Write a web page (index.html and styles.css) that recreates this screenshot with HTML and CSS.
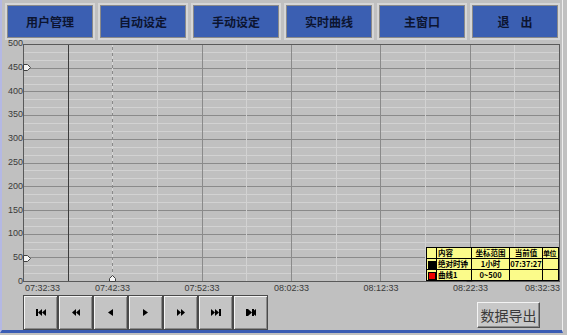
FILE: index.html
```html
<!DOCTYPE html>
<html lang="zh-CN">
<head>
<meta charset="UTF-8">
<meta name="viewport" content="width=device-width, initial-scale=1.0">
<title>实时曲线</title>
<link rel="stylesheet" href="styles.css">
</head>
<body>
<div class="screen">
    <div class="nav">
        <button class="nav-btn">用户管理</button>
        <button class="nav-btn">自动设定</button>
        <button class="nav-btn">手动设定</button>
        <button class="nav-btn">实时曲线</button>
        <button class="nav-btn">主窗口</button>
        <button class="nav-btn">退&nbsp;&nbsp;&nbsp;&nbsp;出</button>
    </div>

    <div class="chart">
        <div class="y-axis">
            <span>500</span><span>450</span><span>400</span><span>350</span><span>300</span><span>250</span>
            <span>200</span><span>150</span><span>100</span><span>50</span><span>0</span>
        </div>
        <div class="plot">
            <svg id="grid" class="grid" width="537" height="238" viewBox="0 0 537 238"></svg>
            <table class="legend">
                <colgroup>
                    <col style="width: 10px">
                    <col style="width: 35px">
                    <col style="width: 38px">
                    <col style="width: 33px">
                    <col style="width: 16px">
                </colgroup>
                <tr><td class="sw"></td><td>内容</td><td class="c">坐标范围</td><td class="c">当前值</td><td class="unit">单位</td></tr>
                <tr><td class="sw"><i class="box black"></i></td><td>绝对时钟</td><td class="c">1小时</td><td class="c">07:37:27</td><td></td></tr>
                <tr><td class="sw"><i class="box red"></i></td><td>曲线1</td><td class="c">0~500</td><td></td><td></td></tr>
            </table>
        </div>
    </div>

    <div class="x-axis">
        <span class="first">07:32:33</span>
        <span>07:42:33</span>
        <span>07:52:33</span>
        <span>08:02:33</span>
        <span>08:12:33</span>
        <span>08:22:33</span>
        <span class="last">08:32:33</span>
    </div>

    <div class="footer">
        <div class="player">
            <button class="play-btn" title="first">
                <svg width="10" height="7" viewBox="0 0 10 7"><rect x="0" y="0" width="2" height="7"/><polygon points="2,3.5 6,0 6,7"/><polygon points="6,3.5 10,0 10,7"/></svg>
            </button>
            <button class="play-btn" title="fast back">
                <svg width="8" height="7" viewBox="0 0 8 7"><polygon points="0,3.5 4,0 4,7"/><polygon points="4,3.5 8,0 8,7"/></svg>
            </button>
            <button class="play-btn" title="back">
                <svg width="5" height="7" viewBox="0 0 5 7"><polygon points="0,3.5 5,0 5,7"/></svg>
            </button>
            <button class="play-btn" title="forward">
                <svg width="5" height="7" viewBox="0 0 5 7"><polygon points="0,0 5,3.5 0,7"/></svg>
            </button>
            <button class="play-btn" title="fast forward">
                <svg width="8" height="7" viewBox="0 0 8 7"><polygon points="0,0 4,3.5 0,7"/><polygon points="4,0 8,3.5 4,7"/></svg>
            </button>
            <button class="play-btn" title="last">
                <svg width="10" height="7" viewBox="0 0 10 7"><polygon points="0,0 4,3.5 0,7"/><polygon points="4,0 8,3.5 4,7"/><rect x="8" y="0" width="2" height="7"/></svg>
            </button>
            <button class="play-btn" title="now">
                <svg width="10" height="7" viewBox="0 0 10 7"><rect x="0" y="0" width="2" height="7"/><polygon points="2,0 6,3.5 2,7"/><rect x="6" y="0" width="2" height="7"/><polygon points="8,1.5 10,0 10,7 8,5.5"/></svg>
            </button>
        </div>
        <button class="export">数据导出</button>
    </div>
</div>

<script>
    // build the chart grid
    const svg = document.getElementById('grid');
    const NS = 'http://www.w3.org/2000/svg';
    const W = 536, H = 237;

    function line(x1, y1, x2, y2, cls) {
        let l = document.createElementNS(NS, 'line');
        l.setAttribute('x1', x1);
        l.setAttribute('y1', y1);
        l.setAttribute('x2', x2);
        l.setAttribute('y2', y2);
        l.setAttribute('class', cls);
        svg.appendChild(l);
    }

    // horizontal lines, 10 divisions with 2 minor lines each
    for (let i = 1; i < 30; i++) {
        let y = Math.round(i * H / 30) + 0.5;
        line(0, y, W, y, i % 3 ? 'minor' : 'major');
    }
    // vertical lines, every 5 minutes
    for (let j = 1; j < 12; j++) {
        let x = Math.round(j * W / 12) + 0.5;
        line(x, 0, x, H, j % 2 ? 'minor' : 'major');
    }

    // cursors
    line(45.5, 0, 45.5, H, 'cursor');
    line(89.5, 0, 89.5, H, 'dashed');

    // frame
    line(0.5, 0, 0.5, H + 1, 'axis');
    line(0, 0.5, W + 1, 0.5, 'axis');
    line(W + 0.5, 0, W + 0.5, H + 1, 'axis');
    line(0, H + 0.5, W + 1, H + 0.5, 'axis');

    // limit markers
    function marker(points) {
        let p = document.createElementNS(NS, 'polygon');
        p.setAttribute('points', points);
        p.setAttribute('class', 'marker');
        svg.appendChild(p);
    }
    marker('0.5,20.5 4.5,20.5 7.5,23.5 4.5,26.5 0.5,26.5');
    marker('0.5,211.5 4.5,211.5 7.5,214.5 4.5,217.5 0.5,217.5');
    marker('86.5,237.5 86.5,234.5 89.5,231.5 92.5,234.5 92.5,237.5');
    marker('443.5,237.5 443.5,234.5 446.5,231.5 449.5,234.5 449.5,237.5');
</script>
</body>
</html>
```

FILE: styles.css
```css
body {
    margin: 0;
    padding: 0;
    background-color: #c0c0c0;
    font-family: "Liberation Sans", Arial, sans-serif;
    overflow: hidden;
}
.screen {
    width: 563px;
    height: 333px;
    box-sizing: border-box;
    border-left: 2px solid #b4b8e4;
    border-right: 1px solid #eeeeee;
    border-bottom: 3px solid #3a5cb4;
    background-color: #c0c0c0;
}
.nav {
    display: flex;
    gap: 3px;
    padding: 3px 0 0 3px;
}
.nav-btn {
    width: 90px;
    height: 37px;
    background-color: #3b5fb2;
    border: 2px solid #d6d6d6;
    outline: 1px solid #8a8a8a;
    outline-offset: -3px;
    color: #0c1430;
    font-family: "Noto Sans CJK SC", sans-serif;
    font-weight: bold;
    font-size: 12px;
    padding: 0;
    cursor: pointer;
}
.chart {
    display: flex;
    margin-top: 4px;
}
.y-axis {
    width: 21px;
    height: 249px;
    margin: -6px 0 -5px;
    display: flex;
    flex-direction: column;
    justify-content: space-between;
    align-items: flex-end;
    font-size: 9px;
    line-height: 11px;
    color: #3a3a3a;
}
.plot {
    position: relative;
    width: 537px;
    height: 238px;
}
.grid {
    display: block;
    overflow: visible;
    shape-rendering: crispEdges;
}
.grid .minor {
    stroke: #d2d2d2;
    stroke-width: 1;
}
.grid .major {
    stroke: #8a8a8a;
    stroke-width: 1;
}
.grid .axis {
    stroke: #5a5a5a;
    stroke-width: 1;
}
.grid .cursor {
    stroke: #3c3c3c;
    stroke-width: 1;
}
.grid .dashed {
    stroke: #d6d6d6;
    stroke-width: 1;
    stroke-dasharray: 3 3;
}
.grid .marker {
    fill: #f4f4f4;
    stroke: #404040;
    stroke-width: 1;
    shape-rendering: auto;
}
.legend {
    position: absolute;
    right: 1px;
    bottom: 1px;
    width: 132px;
    table-layout: fixed;
    border-collapse: collapse;
    background-color: #fbfb8a;
    font-family: "Noto Sans CJK SC", sans-serif;
    font-weight: bold;
    font-size: 7.5px;
    color: #000;
}
.legend td {
    border: 1px solid #000;
    height: 10px;
    padding: 0 0 0 1px;
    line-height: 10px;
    white-space: nowrap;
    overflow: hidden;
}
.legend .c {
    text-align: center;
    padding: 0;
}
.legend .unit {
    padding: 0;
    font-size: 7px;
    letter-spacing: -0.5px;
}
.legend .sw {
    padding: 0;
    text-align: center;
}
.box {
    display: inline-block;
    width: 8px;
    height: 8px;
    vertical-align: middle;
    border: 1px solid #000;
    box-sizing: border-box;
}
.box.black { background-color: #000; }
.box.red { background-color: #ee0000; }
.x-axis {
    display: grid;
    grid-template-columns: 1fr 2fr 2fr 2fr 2fr 2fr 1fr;
    width: 537px;
    margin-left: 21px;
    margin-top: 1px;
    height: 11px;
    font-size: 9px;
    line-height: 11px;
    color: #3a3a3a;
    text-align: center;
}
.x-axis .first { text-align: left; padding-left: 2px; }
.x-axis .last { text-align: right; }
.footer {
    display: flex;
    justify-content: space-between;
    align-items: flex-end;
    margin-top: 1px;
    padding-left: 21px;
    padding-right: 22px;
}
.player {
    display: flex;
}
.play-btn {
    width: 35px;
    height: 35px;
    padding: 0;
    background-color: #c4c4c4;
    border: 1px solid #4a4a4a;
    box-shadow: inset 1px 1px #f4f4f4, inset -1px -1px #8a8a8a;
    display: flex;
    justify-content: center;
    align-items: center;
    cursor: pointer;
}
.play-btn svg {
    fill: #000;
}
.export {
    width: 63px;
    height: 26px;
    margin-bottom: 2px;
    padding: 0;
    background-color: #c8c8c8;
    border: 1px solid;
    border-color: #f4f4f4 #505050 #505050 #f4f4f4;
    box-shadow: inset -1px -1px #8a8a8a;
    color: #3a3a3a;
    font-family: "Noto Sans CJK SC", sans-serif;
    font-size: 14px;
    cursor: pointer;
}
```
